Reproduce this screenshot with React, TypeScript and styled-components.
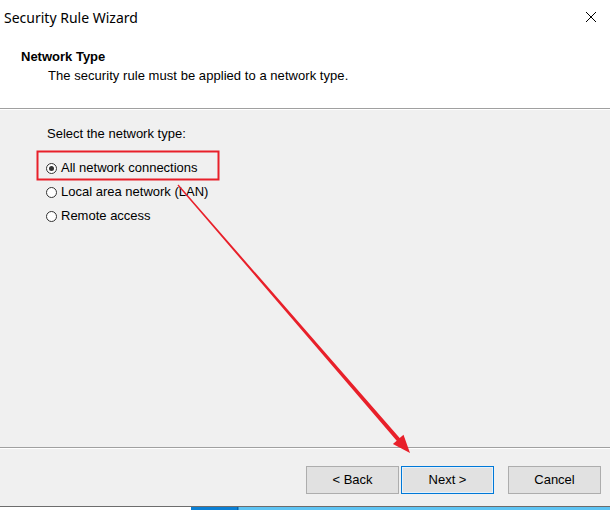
import styled, { createGlobalStyle } from "styled-components";

const GlobalStyle = createGlobalStyle`
  html, body {
    margin: 0;
    padding: 0;
    background: #ffffff;
  }
  body {
    font-family: "Liberation Sans", Arial, sans-serif;
    font-size: 13px;
    color: #000;
  }
`;

const options = [
  { label: "All network connections", checked: true },
  { label: "Local area network (LAN)", checked: false },
  { label: "Remote access", checked: false },
];

const App = () => {
  return (
    <Window>
      <GlobalStyle />
      <TitleBar>
        <Title>Security Rule Wizard</Title>
        <CloseButton aria-label="Close">
          <svg width="12" height="12" viewBox="0 0 12 12">
            <path d="M1 1 L11 11 M11 1 L1 11" stroke="#000" strokeWidth="1" />
          </svg>
        </CloseButton>
      </TitleBar>
      <Header>
        <HeaderTitle>Network Type</HeaderTitle>
        <HeaderText>The security rule must be applied to a network type.</HeaderText>
      </Header>
      <Divider />
      <Body>
        <Prompt>Select the network type:</Prompt>
        <OptionList>
          {options.map((o) => (
            <Option key={o.label}>
              <Radio $checked={o.checked} />
              <span>{o.label}</span>
            </Option>
          ))}
        </OptionList>
      </Body>
      <Divider />
      <Footer>
        <Button>&lt; Back</Button>
        <Button $default>Next &gt;</Button>
        <CancelButton>Cancel</CancelButton>
      </Footer>
      <BottomEdge>
        <TaskStrip />
      </BottomEdge>
      <Annotation width="610" height="510" viewBox="0 0 610 510">
        <rect x="37.5" y="151.5" width="181" height="28" fill="none" stroke="#e8202a" strokeWidth="2" />
        <polygon
          points="177.5,185.4 178.5,184.6 399.7,438.1 403.5,434.8 410,453 392.9,444 396.7,440.7"
          fill="#e8202a"
        />
      </Annotation>
    </Window>
  );
};

export default App;

const Window = styled.div`
  position: relative;
  width: 610px;
  height: 510px;
  display: flex;
  flex-direction: column;
  background: #fff;
  overflow: hidden;
`;

const TitleBar = styled.div`
  height: 34px;
  display: flex;
  align-items: center;
  justify-content: space-between;
  background: #fff;
`;

const Title = styled.div`
  font-family: "Noto Sans", "Open Sans", sans-serif;
  font-size: 14px;
  padding-left: 4px;
  color: #000;
`;

const CloseButton = styled.div`
  width: 38px;
  height: 34px;
  display: flex;
  align-items: center;
  justify-content: center;
`;

const Header = styled.div`
  background: #fff;
  padding: 15px 0 24px 21px;
  height: 74px;
  box-sizing: border-box;
  display: flex;
  flex-direction: column;
  gap: 3px;
`;

const HeaderTitle = styled.div`
  font-weight: bold;
  line-height: 16px;
`;

const HeaderText = styled.div`
  padding-left: 27px;
  line-height: 16px;
  letter-spacing: 0.05px;
`;

const Divider = styled.div`
  height: 1px;
  background: #a0a0a0;
  border-bottom: 1px solid #fff;
`;

const Body = styled.div`
  flex: 1;
  background: #f0f0f0;
  padding: 16px 0 0 47px;
`;

const Prompt = styled.div`
  line-height: 16px;
`;

const OptionList = styled.div`
  margin-top: 18px;
  margin-left: -1px;
  display: flex;
  flex-direction: column;
  gap: 8px;
`;

const Option = styled.label`
  display: flex;
  align-items: center;
  gap: 4px;
  line-height: 16px;
`;

const Radio = styled.span<{ $checked?: boolean }>`
  width: 11px;
  height: 11px;
  border: 1px solid #333;
  border-radius: 50%;
  background: #fff;
  box-sizing: border-box;
  display: flex;
  align-items: center;
  justify-content: center;
  flex-shrink: 0;
  &::after {
    content: "";
    width: 5px;
    height: 5px;
    border-radius: 50%;
    background: ${(p) => (p.$checked ? "#333" : "transparent")};
  }
`;

const Footer = styled.div`
  height: 57px;
  background: #f0f0f0;
  display: flex;
  align-items: center;
  justify-content: flex-end;
  padding-right: 9px;
  gap: 2px;
  box-sizing: border-box;
`;

const Button = styled.button<{ $default?: boolean }>`
  width: 93px;
  height: 28px;
  margin-top: 4px;
  background: #e1e1e1;
  border: 1px solid ${(p) => (p.$default ? "#0078d7" : "#adadad")};
  box-shadow: ${(p) => (p.$default ? "inset 0 0 0 1px #e5f1fb" : "none")};
  font-family: "Liberation Sans", Arial, sans-serif;
  font-size: 13px;
  color: #000;
  padding: 0;
`;

const CancelButton = styled(Button)`
  margin-left: 12px;
`;

const BottomEdge = styled.div`
  height: 3px;
  border-top: 1px solid #6d6d6d;
  background: #fff;
  display: flex;
`;

const TaskStrip = styled.div`
  margin-left: 191px;
  flex: 1;
  background: linear-gradient(90deg, #0a7fd4 0px, #0a7fd4 46px, #0063b1 46px, #0063b1 47px, #5ec4f4 48px, #5ec4f4 100%);
`;

const Annotation = styled.svg`
  position: absolute;
  left: 0;
  top: 0;
  pointer-events: none;
`;
